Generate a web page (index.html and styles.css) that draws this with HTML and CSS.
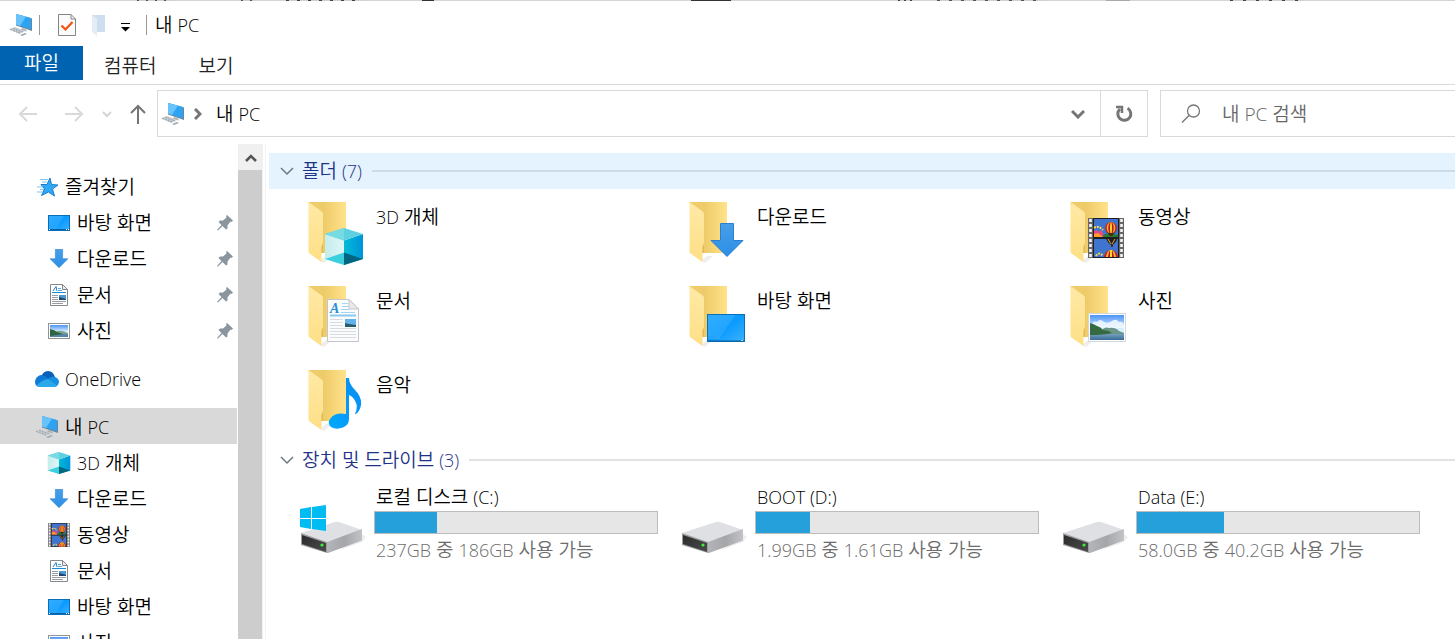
FILE: index.html
```
<!DOCTYPE html>
<html lang="ko">
<head>
  <meta charset="UTF-8">
  <title>내 PC</title>
  <link rel="stylesheet" href="styles.css">
</head>
<body>

<!-- shared icons -->
<svg class="defs" aria-hidden="true">
  <defs>
    <linearGradient id="gBack" x1="0" y1="0" x2="1" y2="0">
      <stop offset="0" stop-color="#f0cd6c"/><stop offset=".4" stop-color="#eecb69"/><stop offset="1" stop-color="#ffe28a"/>
    </linearGradient>
    <linearGradient id="gFront" x1="0" y1="0" x2="0" y2="1">
      <stop offset="0" stop-color="#ffe9a6"/><stop offset="1" stop-color="#fddf85"/>
    </linearGradient>
    <linearGradient id="gBlue" x1="0" y1="0" x2="1" y2="1">
      <stop offset="0" stop-color="#1ba4ff"/><stop offset=".5" stop-color="#0a9bff"/><stop offset="1" stop-color="#3cb1ff"/>
    </linearGradient>
    <linearGradient id="gArrow" x1="0" y1="0" x2="0" y2="1">
      <stop offset="0" stop-color="#479fe8"/><stop offset="1" stop-color="#2b8fe6"/>
    </linearGradient>
    <linearGradient id="gSky" x1="0" y1="0" x2="0" y2="1">
      <stop offset="0" stop-color="#4d93f5"/><stop offset=".55" stop-color="#d8efff"/><stop offset="1" stop-color="#d8efff"/>
    </linearGradient>
    <linearGradient id="gSea" x1="0" y1="0" x2="0" y2="1">
      <stop offset="0" stop-color="#7fa9c4"/><stop offset="1" stop-color="#386a97"/>
    </linearGradient>
    <linearGradient id="gCubeR" x1="0" y1="0" x2="1" y2="0">
      <stop offset="0" stop-color="#00bcd4"/><stop offset="1" stop-color="#0093dc"/>
    </linearGradient>
    <linearGradient id="gCubeL" x1="0" y1="0" x2="1" y2="0">
      <stop offset="0" stop-color="#c5ecec"/><stop offset="1" stop-color="#dff6f8"/>
    </linearGradient>
    <linearGradient id="gNote" x1="0" y1="1" x2="1" y2="0">
      <stop offset="0" stop-color="#00a8ff"/><stop offset="1" stop-color="#0a8cf0"/>
    </linearGradient>
    <linearGradient id="gSide" x1="0" y1="0" x2="1" y2="0">
      <stop offset="0" stop-color="#b4b5b8"/><stop offset=".5" stop-color="#a5a6a9"/><stop offset="1" stop-color="#c2c3c6"/>
    </linearGradient>
    <linearGradient id="gFace" x1="0" y1="0" x2="1" y2="1">
      <stop offset="0" stop-color="#2c2c2c"/><stop offset="1" stop-color="#4b4b4b"/>
    </linearGradient>
  </defs>

  <symbol id="folder" viewBox="0 0 68 66">
    <path d="M20 60 L26 55 L32 55 L24 62Z" fill="#eeeeee"/>
    <path d="M8.500 1H46V52H14Z" fill="url(#gBack)"/>
    <path d="M8.500 1L21 10Q23 11 23 13V43L21.500 46V61L9.500 52.500Q8.500 52 8.500 50Z" fill="url(#gFront)"/>
    <path d="M23 42L21.500 46V52H23Z" fill="#e2bb58"/>
  </symbol>

  <symbol id="cube" viewBox="0 0 38 37">
    <path d="M0 6L19 12.500V37L0 31Z" fill="url(#gCubeL)"/>
    <path d="M38 6L19 12.500V37L38 31Z" fill="url(#gCubeR)"/>
    <path d="M0 6L19 0L38 6L19 12.500Z" fill="#5fd0e2"/>
    <path d="M0 6L19 0V12.500Z" fill="#76dbe3"/>
    <path d="M0 31L19 24.500V37Z" fill="#3ccfdd"/>
    <path d="M38 31L19 24.500V37Z" fill="#00667f"/>
  </symbol>

  <symbol id="arrow" viewBox="0 0 34 34">
    <path d="M10.500 .5H23.500V17.500H33L17 33.500L1 17.500H10.500Z" fill="url(#gArrow)" stroke="#2c7fce"/>
  </symbol>

  <symbol id="desktop" viewBox="0 0 38 28">
    <rect x=".5" y=".5" width="37" height="27" fill="url(#gBlue)" stroke="#0b6fb8"/>
    <path d="M1 1H28L12 25H1Z" fill="#fff" opacity=".1"/>
    <path d="M1 27H37" stroke="#0b5f9e"/>
    <path d="M34 26.500H36" stroke="#9fd0f5"/>
  </symbol>

  <symbol id="desktop-small" viewBox="0 0 22 16">
    <rect x=".5" y=".5" width="21" height="15" fill="url(#gBlue)" stroke="#0b6fb8"/>
    <path d="M1 1H16L8 14H1Z" fill="#fff" opacity=".1"/>
    <path d="M1 14.500H21" stroke="#0b5f9e"/>
    <path d="M1 14.500H2M18 14.500H19M20 14.500H21" stroke="#fff"/>
  </symbol>

  <symbol id="photo" viewBox="0 0 38 29">
    <rect x=".5" y=".5" width="37" height="28" fill="#fff" stroke="#d4d7da"/>
    <rect x="2" y="2" width="34" height="25" fill="url(#gSky)"/>
    <path d="M4 12Q5 7 9 9Q12 5 16 9Q20 11 24 8Q28 5 31 9Q35 8 36 12V15H4Z" fill="#f2f9ff" opacity=".85"/>
    <rect x="2" y="20" width="34" height="7" fill="url(#gSea)"/>
    <path d="M12 20Q16 13 21 15Q27 14 31 18L36 20V21H12Z" fill="#6b9588"/>
    <path d="M2 10Q6 11 9 13Q13 14 15 17Q20 17 24 20Q16 22 2 22Z" fill="#35693f"/>
  </symbol>

  <symbol id="photo-small" viewBox="0 0 22 16">
    <rect x=".5" y=".5" width="21" height="15" fill="#fff" stroke="#8f9499"/>
    <rect x="2" y="2" width="18" height="12" fill="url(#gSky)"/>
    <rect x="2" y="10" width="18" height="4" fill="#5585ab"/>
    <path d="M7 9Q12 6 20 10V11H7Z" fill="#7ea294"/>
    <path d="M2 6Q7 7 9 9L15 11L2 13Z" fill="#2e6440"/>
  </symbol>

  <symbol id="document-small" viewBox="0 0 18 22">
    <path d="M.5 .5H12.500L17.500 5.500V21.500H.5Z" fill="#fff" stroke="#85898c"/>
    <path d="M12.500 .5V5.500H17.500Z" fill="#eee" stroke="#85898c"/>
    <path d="M3 7L6 2.500L7 7" fill="none" stroke="#1a7fc9"/>
    <path d="M8 4.500H11M8 6.500H12" stroke="#5aaade"/>
    <path d="M2 8.500H16" stroke="#1a8ad6"/>
    <path d="M2 11.500H8M2 13.500H8M2 15.500H8M2 17.500H16M2 19.500H13" stroke="#9a9ea2"/>
    <rect x="9" y="11" width="7" height="5" fill="#4b97cf"/>
    <path d="M9 13L16 15V16H9Z" fill="#20466b"/>
  </symbol>

  <symbol id="video" viewBox="0 0 36 40">
    <rect width="36" height="40" fill="#666"/>
    <rect x="5" width="26" height="40" fill="#1e1e22"/>
    <rect x="6" y="1" width="24" height="18" fill="#3f74cf"/>
    <rect x="6" y="21" width="24" height="18" fill="#3f74cf"/>
    <path d="M2.500 1V40M33.500 1V40" stroke="#f4f4f4" stroke-width="2.600" stroke-dasharray="3 2"/>
    <path d="M6 13L9 12L11 14L13 12L15 15L17 19H6Z" fill="#e84a7c"/>
    <path d="M6 16L10 15L15 19H6Z" fill="#ff9d2e"/>
    <path d="M6 10Q10 7 15 12" stroke="#ffd84a" stroke-width="2" stroke-dasharray="2 1" fill="none"/>
    <path d="M15 17Q22 14 30 17V19H15Z" fill="#257a2e"/>
    <ellipse cx="23" cy="10" rx="6" ry="6" fill="#c62020"/>
    <ellipse cx="23" cy="10" rx="4.300" ry="6" fill="#f3b92e"/>
    <ellipse cx="23" cy="10" rx="2.700" ry="6" fill="#b81a1a"/>
    <ellipse cx="23" cy="10" rx="1" ry="6" fill="#ffd52e"/>
    <path d="M18 13L22 18H24L28 13L25 15H21Z" fill="#4a2a10"/>
    <path d="M18 21H29Q28 25 24 27H23Q20 25 18 21Z" fill="#222"/>
    <path d="M20 21L23 26M27 21L24 26" stroke="#f0a020"/>
    <rect x="23" y="27" width="2" height="2" fill="#6a1a10"/>
    <path d="M16 39Q17 32 23 32Q29 32 30 39Z" fill="#c62020"/>
    <path d="M18 39Q19 32 23 32Q27 32 28 39Z" fill="#f3b92e"/>
    <path d="M20 39Q21 32 23 32Q25 32 26 39Z" fill="#b81a1a"/>
    <path d="M22 39V32H24V39Z" fill="#ffd52e"/>
    <path d="M8 38Q11 33 15 38" stroke="#ffd84a" stroke-width="2" stroke-dasharray="2 1" fill="none"/>
  </symbol>

  <symbol id="note" viewBox="0 0 34 52">
    <path d="M18 0H21Q21 6 27 12Q34 19 33 27Q32 33 28 36H27Q30 29 28 25Q26 19 21 17V41Q21 47 15 49.500Q8 52 3 49Q-1 45 2 41Q7 34 18 36Z" fill="url(#gNote)"/>
  </symbol>

  <symbol id="drive" viewBox="0 0 66 58">
    <path d="M62 33L66 36L62 41L40 49Z" fill="#eee"/>
    <path d="M1 32L35 21Q37 20.500 39 21L62 29L27 41Z" fill="#dfe0e4"/>
    <path d="M27 41L62 28V39.500L28 52H27Z" fill="url(#gSide)"/>
    <path d="M1 32L27 41V52L1 44Z" fill="#9b9c9f"/>
    <path d="M2 34L26 42V51L2 43Z" fill="url(#gFace)"/>
    <circle cx="22" cy="44" r="1.600" fill="#3ef03e"/>
  </symbol>

  <symbol id="pc" viewBox="1 1 24 22">
    <path d="M8 1L24 5.500V18L8 12.500Z" fill="#6d8494"/>
    <path d="M8 1L23 5V16.500L8 11.500Z" fill="#2ea3f2"/>
    <path d="M8 1L18 3.500L12 13L8 11.500Z" fill="#68c3fa"/>
    <path d="M14 15L18 16.500L19 18.500L13 17Z" fill="#a6b0b7"/>
    <path d="M1 16L7 14L17 18L11 21Z" fill="#c7ccd0"/>
    <path d="M2 16.500L12 20M5 15.500L15 19" stroke="#99a2a8" stroke-dasharray="2 1"/>
    <path d="M12 22L17 20L19 21L14 23Z" fill="#9fa8ae"/>
  </symbol>

  <symbol id="pin" viewBox="0 0 16 16">
    <path d="M10 0L16 5.500L14.500 7L13.500 6.500L10.500 10.500V13.500L9 14.500L5.500 11L1 15.500L0 15L4.500 10L1.500 7L3 5.500H6L9.500 2.500L9 1Z" fill="#8a959e"/>
  </symbol>
</svg>

<header>
  <div class="titlebar">
    <svg width="24" height="22"><use href="#pc"/></svg>
    <span class="sep"></span>
    <button class="quick-check" aria-label="속성">
      <svg width="18" height="22" viewBox="0 0 18 22">
        <path d="M.5 .5H13L17.500 5V21.500H.5Z" fill="#fafafa" stroke="#858585"/>
        <path d="M13 .5V5H17.500" fill="none" stroke="#858585"/>
        <path d="M3.500 11.500L7.500 15.500L14.500 8" fill="none" stroke="#f4520f" stroke-width="2.200"/>
      </svg>
    </button>
    <button class="quick-folder" aria-label="새 폴더">
      <svg width="16" height="21" viewBox="0 0 16 21">
        <path d="M1 0H14V17H1Z" fill="#cfdeef"/>
        <path d="M1 0L6 4V21L1 17Z" fill="#e3ecf7"/>
      </svg>
    </button>
    <button class="quick-more" aria-label="빠른 실행 도구 모음 사용자 지정">
      <svg width="10" height="9" viewBox="0 0 10 9">
        <path d="M0 .5H9" stroke="#000"/><path d="M0 4H9L4.500 8.500Z"/>
      </svg>
    </button>
    <span class="sep sep-title"></span>
    <h1>내 <span class="en">PC</span></h1>
  </div>
  <nav class="tabs">
    <button class="tab active">파일</button>
    <button class="tab">컴퓨터</button>
    <button class="tab">보기</button>
  </nav>
</header>

<div class="toolbar">
  <div class="history">
    <button aria-label="뒤로"><svg width="20" height="16" viewBox="0 0 20 16"><path d="M19 8H2M9 1L2 8L9 15" fill="none" stroke="#d9d9d9" stroke-width="2"/></svg></button>
    <button aria-label="앞으로"><svg width="20" height="16" viewBox="0 0 20 16"><path d="M1 8H18M11 1L18 8L11 15" fill="none" stroke="#d9d9d9" stroke-width="2"/></svg></button>
    <button aria-label="최근 위치"><svg width="10" height="8" viewBox="0 0 10 8"><path d="M1 2L5 6L9 2" fill="none" stroke="#d4d4d4" stroke-width="2"/></svg></button>
    <button aria-label="위로"><svg width="16" height="20" viewBox="0 0 16 20"><path d="M8 20V2M1 9L8 2L15 9" fill="none" stroke="#757575" stroke-width="2"/></svg></button>
  </div>
  <div class="address">
    <svg width="24" height="22"><use href="#pc"/></svg>
    <svg class="crumb-arrow" width="8" height="12" viewBox="0 0 8 12"><path d="M1 1L6 6L1 11" fill="none" stroke="#757575" stroke-width="3"/></svg>
    <a class="crumb" href="#">내 <span class="en">PC</span></a>
    <button class="drop" aria-label="이전 위치"><svg width="14" height="10" viewBox="0 0 14 10"><path d="M1 2L7 8L13 2" fill="none" stroke="#757575" stroke-width="3"/></svg></button>
    <button class="refresh" aria-label="새로 고침"><svg width="18" height="18" viewBox="0 0 18 18"><path d="M12.500 3.200A6.500 6.500 0 1 1 5 4" fill="none" stroke="#757575" stroke-width="3"/><path d="M1 2H7V8" fill="none" stroke="#757575" stroke-width="2.500"/></svg></button>
  </div>
  <label class="search">
    <svg width="20" height="20" viewBox="0 0 20 20"><circle cx="12.500" cy="7" r="6" fill="none" stroke="#777" stroke-width="1.300"/><path d="M8 11.500L1 18.500" stroke="#777" stroke-width="1.500"/></svg>
    <input type="text" placeholder="내 PC 검색" aria-label="내 PC 검색">
  </label>
</div>

<div class="explorer">
  <nav class="sidebar">
    <ul class="tree">
      <li><a href="#">
        <svg width="24" height="22" viewBox="0 0 24 22"><path d="M15 2L16.500 8.500L23 9L17.500 13L19.500 20L13.500 16L6.500 19.500L9.500 13L6 8.500H12Z" fill="#2fa8f8" stroke="#1b7cc8"/><path d="M5 3.500H13M7 6H12M2 11H8M5 13.500H9M2 16H8" stroke="#7cc6f5"/></svg>
        즐겨찾기</a></li>
      <li class="child"><a href="#"><svg width="24" height="16"><use href="#desktop-small"/></svg>바탕 화면</a><svg width="16" height="16"><use href="#pin"/></svg></li>
      <li class="child"><a href="#"><svg width="24" height="19"><use href="#arrow"/></svg>다운로드</a><svg width="16" height="16"><use href="#pin"/></svg></li>
      <li class="child"><a href="#"><svg width="24" height="22"><use href="#document-small"/></svg>문서</a><svg width="16" height="16"><use href="#pin"/></svg></li>
      <li class="child"><a href="#"><svg width="24" height="16"><use href="#photo-small"/></svg>사진</a><svg width="16" height="16"><use href="#pin"/></svg></li>
    </ul>
    <ul class="tree">
      <li><a href="#">
        <svg width="24" height="16" viewBox="0 0 24 16"><path d="M6 6Q8 0 13 0Q18 0 20 6L14 10L5 7Z" fill="#0a5fb8"/><path d="M6 4Q9 4 14 8L4 16Q0 15 0 10.500Q1 5 6 4Z" fill="#0f7ad6"/><path d="M13 8Q16 5 19 5.500Q24 7 24 11Q23 16 19 16Z" fill="#1490df"/><path d="M2 14Q7 9 13 8L22 14.500Q21 16 19 16H5Q3 16 2 14Z" fill="#29a8ea"/></svg>
        <span class="en">OneDrive</span></a></li>
    </ul>
    <ul class="tree">
      <li class="selected"><a href="#"><svg width="24" height="22"><use href="#pc"/></svg><span>내 <span class="en">PC</span></span></a></li>
      <li class="child"><a href="#"><svg width="24" height="22"><use href="#cube"/></svg><span><span class="en">3D</span> 개체</span></a></li>
      <li class="child"><a href="#"><svg width="24" height="19"><use href="#arrow"/></svg>다운로드</a></li>
      <li class="child"><a href="#"><svg width="24" height="24"><use href="#video"/></svg>동영상</a></li>
      <li class="child"><a href="#"><svg width="24" height="22"><use href="#document-small"/></svg>문서</a></li>
      <li class="child"><a href="#"><svg width="24" height="16"><use href="#desktop-small"/></svg>바탕 화면</a></li>
      <li class="child"><a href="#"><svg width="24" height="16"><use href="#photo-small"/></svg>사진</a></li>
    </ul>
  </nav>
  <div class="scrollbar">
    <button aria-label="위로 스크롤"><svg width="12" height="10" viewBox="0 0 12 10"><path d="M1 8L6 3L11 8" fill="none" stroke="#555" stroke-width="2.600"/></svg></button>
    <div class="thumb"></div>
  </div>

  <main>
    <section>
      <h2 class="hover">
        <svg width="14" height="9" viewBox="0 0 14 9"><path d="M1 1L7 7L13 1" fill="none" stroke="#6f7780" stroke-width="1.500"/></svg>
        <span>폴더 <span class="en">(7)</span></span>
      </h2>
      <div class="grid">
        <a class="item" href="#">
          <svg width="68" height="66"><use href="#folder"/><use href="#cube" x="25" y="27" width="38" height="37"/></svg>
          <div><span class="en">3D</span> 개체</div>
        </a>
        <a class="item" href="#">
          <svg width="68" height="66"><use href="#folder"/><use href="#arrow" x="29" y="22" width="34" height="34"/></svg>
          <div>다운로드</div>
        </a>
        <a class="item" href="#">
          <svg width="68" height="66"><use href="#folder"/><use href="#video" x="26" y="17" width="36" height="40"/></svg>
          <div>동영상</div>
        </a>
        <a class="item" href="#">
          <svg width="68" height="66">
            <use href="#folder"/>
            <g transform="translate(27 14)">
              <path d="M.5 .5H22L31.500 10V42.500H.5Z" fill="#fbfcfd" stroke="#c3c7cb"/>
              <path d="M22 .5V10H31.500Z" fill="#e9e9e9" stroke="#c3c7cb"/>
              <text class="doc-letter" x="3" y="14">A</text>
              <path d="M15 4.500H21M15 7.500H22M14 10.500H22M14 13.500H28" stroke="#a5d3f2"/>
              <path d="M3 16.500H29" stroke="#8cc8ee" stroke-width="2"/>
              <path d="M3 20.500H16M3 23.500H16M3 26.500H16M3 29.500H29M3 32.500H29M3 35.500H29M3 38.500H29" stroke="#d8dbde"/>
              <rect x="18" y="20" width="11" height="8" fill="#64b2eb"/>
              <path d="M18 24L22 25L29 26V28H18Z" fill="#275d68"/>
            </g>
          </svg>
          <div>문서</div>
        </a>
        <a class="item" href="#">
          <svg width="68" height="66"><use href="#folder"/><use href="#desktop" x="26" y="29" width="38" height="28"/></svg>
          <div>바탕 화면</div>
        </a>
        <a class="item" href="#">
          <svg width="68" height="66"><use href="#folder"/><use href="#photo" x="26" y="28" width="38" height="29"/></svg>
          <div>사진</div>
        </a>
        <a class="item" href="#">
          <svg width="68" height="66"><use href="#folder"/><use href="#note" x="28" y="9" width="34" height="52"/></svg>
          <div>음악</div>
        </a>
      </div>
    </section>

    <section>
      <h2>
        <svg width="14" height="9" viewBox="0 0 14 9"><path d="M1 1L7 7L13 1" fill="none" stroke="#6f7780" stroke-width="1.500"/></svg>
        <span>장치 및 드라이브 <span class="en">(3)</span></span>
      </h2>
      <div class="grid">
        <a class="drive" href="#">
          <svg width="66" height="58" viewBox="0 0 66 58"><use href="#drive"/><path d="M0 8L11 6V17H0ZM12 6L26 4V17H12ZM0 18H11V28L0 26ZM12 18H26V30L12 28Z" fill="#00bcf2"/></svg>
          <div class="info">
            <div class="name">로컬 디스크 <span class="en">(C:)</span></div>
            <progress value="62" max="284" aria-label="C:"></progress>
            <div class="space"><span class="en">237GB</span> 중 <span class="en">186GB</span> 사용 가능</div>
          </div>
        </a>
        <a class="drive" href="#">
          <svg width="66" height="58"><use href="#drive"/></svg>
          <div class="info">
            <div class="name"><span class="en">BOOT (D:)</span></div>
            <progress value="38" max="199" aria-label="D:"></progress>
            <div class="space"><span class="en">1.99GB</span> 중 <span class="en">1.61GB</span> 사용 가능</div>
          </div>
        </a>
        <a class="drive" href="#">
          <svg width="66" height="58"><use href="#drive"/></svg>
          <div class="info">
            <div class="name"><span class="en">Data (E:)</span></div>
            <progress value="178" max="580" aria-label="E:"></progress>
            <div class="space"><span class="en">58.0GB</span> 중 <span class="en">40.2GB</span> 사용 가능</div>
          </div>
        </a>
      </div>
    </section>
  </main>
</div>

</body>
</html>
```
FILE: styles.css
```
* {
  box-sizing: border-box;
}

body {
  margin: 0;
  height: 100vh;
  display: flex;
  flex-direction: column;
  overflow: hidden;
  background-color: #fff;
  color: #000;
  font-family: "Open Sans", "Noto Sans CJK KR", sans-serif;
  font-size: 19px;
  font-weight: 350;
  line-height: 24px;
}

button, input {
  font: inherit;
  color: inherit;
  border: none;
  background: none;
  padding: 0;
}

button {
  display: flex;
  align-items: center;
  justify-content: center;
}

a {
  color: inherit;
  text-decoration: none;
}

svg {
  flex: none;
}

.defs {
  position: absolute;
  width: 0;
  height: 0;
}

.doc-letter {
  font: italic bold 14px "Liberation Serif", serif;
  fill: #2a8fd4;
}

.en {
  font-size: 18px;
}

/* title bar, with the edge of the window behind showing on top */
.titlebar {
  display: flex;
  align-items: center;
  height: 46px;
  padding: 4px 0 0 9px;
  background-color: #fff;
  background-image:
    repeating-linear-gradient(90deg, #555 0 2px, #d0d0d0 2px 9px),
    repeating-linear-gradient(90deg, #555 0 2px, #d0d0d0 2px 9px),
    repeating-linear-gradient(90deg, #444 0 3px, #d0d0d0 3px 11px),
    linear-gradient(#333, #333),
    linear-gradient(#333, #333),
    repeating-linear-gradient(90deg, #444 0 2px, #d0d0d0 2px 6px),
    repeating-linear-gradient(90deg, #555 0 3px, #d0d0d0 3px 12px),
    linear-gradient(#aaa, #aaa),
    repeating-linear-gradient(90deg, #444 0 3px, #d0d0d0 3px 13px),
    linear-gradient(#d4d4d4, #d4d4d4);
  background-size: 36px 1px, 14px 1px, 76px 1px, 12px 1px, 40px 1px, 18px 1px, 108px 1px, 24px 1px, 74px 1px, 100% 1px;
  background-position: 137px 0, 241px 0, 286px 0, 422px 0, 691px 0, 898px 0, 937px 0, 1106px 0, 1230px 0, 0 0;
  background-repeat: no-repeat;
}

.titlebar h1 {
  margin: 0;
  font-size: 19px;
  font-weight: 350;
}

.sep {
  width: 1px;
  height: 20px;
  margin-left: 6px;
  background-color: #999;
}

.sep-title {
  margin: 0 8px 0 15px;
}

.quick-check {
  margin-left: 18px;
}

.quick-folder {
  margin: 0 14px 0 15px;
}

.quick-more {
  padding-top: 4px;
}

/* ribbon tabs */
.tabs {
  display: flex;
  height: 39px;
  border-bottom: 1px solid #dadbdc;
  color: #222;
}

.tab {
  height: 38px;
  padding: 2px 21px 0;
}

.tab.active {
  height: 34px;
  padding: 0 24px;
  background-color: #0063b1;
  color: #fff;
}

/* address row */
.toolbar {
  display: flex;
  padding: 5px 0 7px;
  overflow: hidden;
}

.history {
  display: flex;
  align-items: center;
  justify-content: space-between;
  width: 157px;
  padding: 0 11px 0 18px;
}

.history button:nth-child(2) {
  margin-left: 8px;
}

.address {
  flex: 1;
  display: flex;
  align-items: center;
  height: 47px;
  padding-left: 3px;
  border: 1px solid #d9d9d9;
}

.crumb-arrow {
  margin: 0 14px 0 9px;
}

.crumb {
  flex: 1;
}

.drop {
  width: 44px;
  height: 45px;
}

.refresh {
  width: 47px;
  height: 45px;
  border-left: 1px solid #d9d9d9;
}

.search {
  display: flex;
  align-items: center;
  gap: 21px;
  width: 295px;
  height: 47px;
  margin-left: 12px;
  padding-left: 20px;
  border: 1px solid #d9d9d9;
  border-right: none;
}

.search input {
  width: 200px;
  outline: none;
}

.search input::placeholder {
  color: #666;
}

/* navigation pane */
.explorer {
  flex: 1;
  display: flex;
  min-height: 0;
}

.sidebar {
  width: 238px;
  padding-top: 24px;
  overflow: hidden;
}

.tree {
  list-style: none;
  margin: 0 0 12px;
  padding: 0;
}

.tree li {
  display: flex;
  align-items: center;
  justify-content: space-between;
  height: 36px;
  margin-right: 1px;
  padding: 1px 4px 0 35px;
}

.tree li.child {
  padding-left: 47px;
}

.tree li.selected {
  background-color: #d9d9d9;
}

.tree a {
  display: flex;
  align-items: center;
  gap: 6px;
}

.scrollbar {
  display: flex;
  flex-direction: column;
  width: 25px;
  background-color: #f0f0f0;
}

.scrollbar button {
  height: 26px;
  padding-top: 2px;
}

.scrollbar .thumb {
  flex: 1;
  margin-right: 1px;
  background-color: #cdcdcd;
}

/* content */
main {
  flex: 1;
  min-width: 0;
  padding-top: 9px;
  margin-left: 2px;
  padding-left: 3px;
  border-left: 1px solid #f3f3f3;
}

h2 {
  display: flex;
  align-items: center;
  gap: 8px;
  height: 36px;
  margin: 0;
  padding: 0 0 2px 11px;
  font-size: 19px;
  font-weight: 350;
  color: #1e3287;
}

h2::after {
  content: "";
  flex: 1;
  height: 2px;
  margin-left: 2px;
  background-color: #e2e2e2;
}

h2.hover {
  padding-bottom: 0;
  background-color: #e5f3ff;
}

h2.hover::after {
  background-color: #cddbe7;
}

.grid {
  display: grid;
  grid-template-columns: repeat(auto-fill, 381px);
  grid-auto-rows: 84px;
  padding: 2px 0 0 31px;
}

.item {
  display: flex;
  gap: 8px;
  padding-top: 10px;
}

.item div {
  padding-top: 4px;
}

.drive {
  display: flex;
  gap: 8px;
  padding-top: 4px;
}

.drive svg {
  margin-top: 16px;
}

.info {
  width: 284px;
}

.name, .space {
  padding-left: 2px;
}

.space {
  color: #6d6d6d;
}

progress {
  -webkit-appearance: none;
  appearance: none;
  display: block;
  width: 100%;
  height: 23px;
  margin: 2px 0 4px;
  border: 1px solid #bcbcbc;
}

progress::-webkit-progress-bar {
  background-color: #e6e6e6;
}

progress::-webkit-progress-value {
  background-color: #26a0da;
}
```
